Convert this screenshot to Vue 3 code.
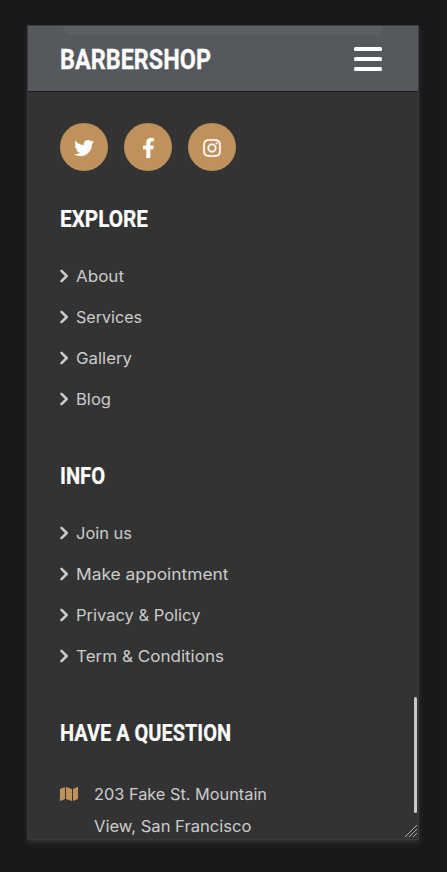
<script setup>
const sections = [
  { title: 'EXPLORE', width: 88, links: [
    { text: 'About', width: 48 }, { text: 'Services', width: 66 },
    { text: 'Gallery', width: 56 }, { text: 'Blog', width: 35 },
  ] },
  { title: 'INFO', width: 45, links: [
    { text: 'Join us', width: 56 }, { text: 'Make appointment', width: 152.5 },
    { text: 'Privacy & Policy', width: 124.5 }, { text: 'Term & Conditions', width: 148 },
  ] },
]

// Condenses or widens a label to its intended line width.
const vFit = {
  mounted(el, { value }) {
    const natural = el.getBoundingClientRect().width
    if (natural) el.style.transform = `scaleX(${value / natural})`
  },
}
</script>

<template>
  <div class="stage">
    <div class="phone">
      <header class="bar">
        <div class="sheen"></div>
        <span v-fit="151" class="brand">BARBERSHOP</span>
        <div class="burger"><i></i><i></i><i></i></div>
      </header>
      <main class="content">
        <div class="social">
          <a class="disc">
            <svg width="20" height="20" viewBox="0 0 512 512"><path d="M459.37 151.716c.325 4.548.325 9.097.325 13.645 0 138.72-105.583 298.558-298.558 298.558-59.452 0-114.68-17.219-161.137-47.106 8.447.974 16.568 1.299 25.34 1.299 49.055 0 94.213-16.568 130.274-44.832-46.132-.975-84.792-31.188-98.112-72.772 6.498.974 12.995 1.624 19.818 1.624 9.421 0 18.843-1.3 27.614-3.573-48.081-9.747-84.143-51.98-84.143-102.985v-1.299c13.969 7.797 30.214 12.67 47.431 13.319-28.264-18.843-46.781-51.005-46.781-87.391 0-19.492 5.197-37.36 14.294-52.954 51.655 63.675 129.3 105.258 216.365 109.807-1.624-7.797-2.599-15.918-2.599-24.04 0-57.828 46.782-104.934 104.934-104.934 30.213 0 57.502 12.67 76.67 33.137 23.715-4.548 46.456-13.32 66.599-25.34-7.798 24.366-24.366 44.833-46.132 57.827 21.117-2.273 41.584-8.122 60.426-16.243-14.292 20.791-32.161 39.308-52.628 54.253z" /></svg>
          </a>
          <a class="disc">
            <svg class="bold" width="13" height="20" viewBox="0 0 320 512"><path d="M279.14 288l14.22-92.66h-88.91v-60.13c0-25.35 12.42-50.06 52.24-50.06h40.42V6.26S260.43 0 225.36 0c-73.22 0-121.08 44.38-121.08 124.72v70.62H22.89V288h81.39v224h100.17V288z" /></svg>
          </a>
          <a class="disc">
            <svg class="bold" width="18" height="20" viewBox="0 0 448 512"><path d="M224.1 141c-63.600 0-114.900 51.300-114.900 114.900s51.300 114.900 114.900 114.900S339 319.500 339 255.900 287.700 141 224.100 141zm0 189.600c-41.100 0-74.700-33.500-74.700-74.700s33.500-74.700 74.700-74.700 74.700 33.500 74.700 74.700-33.600 74.700-74.700 74.700zm146.400-194.300c0 14.900-12 26.800-26.800 26.800-14.900 0-26.800-12-26.800-26.800s12-26.800 26.800-26.800 26.800 12 26.800 26.800zm76.100 27.200c-1.700-35.900-9.900-67.700-36.200-93.900-26.200-26.200-58-34.400-93.900-36.200-37-2.100-147.900-2.100-184.900 0-35.800 1.700-67.600 9.900-93.900 36.100s-34.400 58-36.200 93.900c-2.100 37-2.100 147.900 0 184.900 1.700 35.900 9.900 67.700 36.200 93.900s58 34.400 93.900 36.200c37 2.100 147.900 2.100 184.900 0 35.900-1.700 67.700-9.900 93.900-36.200 26.200-26.200 34.400-58 36.200-93.900 2.100-37 2.100-147.800 0-184.800zM398.800 388c-7.800 19.600-22.900 34.700-42.600 42.600-29.500 11.700-99.500 9-132.100 9s-102.700 2.600-132.100-9c-19.600-7.800-34.700-22.900-42.600-42.600-11.700-29.500-9-99.500-9-132.100s-2.600-102.700 9-132.100c7.800-19.600 22.900-34.700 42.600-42.600 29.500-11.700 99.500-9 132.100-9s102.700-2.600 132.100 9c19.600 7.800 34.700 22.900 42.600 42.600 11.700 29.500 9 99.500 9 132.100s2.700 102.700-9 132.100z" /></svg>
          </a>
        </div>

        <section v-for="s in sections" :key="s.title" class="section">
          <h2><span v-fit="s.width" class="fit">{{ s.title }}</span></h2>
          <ul>
            <li v-for="l in s.links" :key="l.text">
              <svg width="8" height="14" viewBox="0 0 8 14"><path d="M1.500 1.800 6.700 7l-5.200 5.200" /></svg>
              <span v-fit="l.width" class="fit">{{ l.text }}</span>
            </li>
          </ul>
        </section>

        <section>
          <h2><span v-fit="171" class="fit">HAVE A QUESTION</span></h2>
          <div class="address">
            <svg width="18" height="16" viewBox="0 0 576 512"><path d="M0 117.660v346.320c0 11.320 11.430 19.060 21.940 14.860L160 416V32L20.120 87.950A32.006 32.006 0 0 0 0 117.660zM192 416l192 64V96L192 32v384zM554.060 33.160L416 96v384l139.880-55.950A31.996 31.996 0 0 0 576 394.340V48.020c0-11.320-11.430-19.060-21.940-14.860z" /></svg>
            <div class="lines">
              <div><span v-fit="173" class="fit">203 Fake St. Mountain</span></div>
              <div><span v-fit="157.5" class="fit">View, San Francisco</span></div>
            </div>
          </div>
        </section>
      </main>
      <div class="thumb"></div>
      <svg class="grip" width="14" height="14" viewBox="0 0 14 14"><path d="M1 13 13 1M5 13l8-8M9 13l4-4" /></svg>
    </div>
  </div>
</template>

<style>
body { background: #19191b; }
</style>

<style scoped>
.stage {
  box-sizing: border-box;
  height: 872px;
  padding: 25px 28px 32px 27px;
  background: #19191b;
  overflow: hidden;
}
.phone {
  position: relative;
  box-sizing: border-box;
  height: 815px;
  border: 1px solid #3b3b3d;
  background: #333;
  box-shadow: 0 3px 5px #303032;
  overflow: hidden;
  font-family: Inter, "Liberation Sans", sans-serif;
}
.bar {
  position: relative;
  box-sizing: border-box;
  height: 66px;
  padding: 0 36px 0 32px;
  display: flex;
  align-items: center;
  justify-content: space-between;
  background: #55585d;
  border-bottom: 1px solid #1d1d20;
}
.sheen {
  position: absolute;
  top: 0;
  left: 35px;
  right: 35px;
  height: 9px;
  border-radius: 0 0 7px 7px;
  background: #5c5f64;
}
.brand {
  position: relative;
  padding-top: 3px;
  display: inline-block;
  transform-origin: left;
  font: 700 28px/40px Roboto, sans-serif;
  -webkit-text-stroke: 0.3px #fff;
  color: #fff;
}
.burger { display: flex; flex-direction: column; gap: 6px; flex: none; }
.burger i { width: 28px; height: 4px; border-radius: 1.5px; background: #fff; }
.content { padding: 31px 32px 0; }
.social { display: flex; gap: 16px; margin-bottom: 29px; }
.disc {
  width: 48px;
  height: 48px;
  border-radius: 50%;
  background: #bf925b;
  display: flex;
  align-items: center;
  justify-content: center;
}
.disc svg { fill: #fff; margin-top: 2px; overflow: visible; }
.disc .bold { stroke: #fff; stroke-width: 5; }
h2 {
  margin: 0 0 19px;
  height: 36px;
  font: 700 24px/38px Roboto, sans-serif;
  -webkit-text-stroke: 0.2px #fff;
  color: #fff;
}
.section { margin-bottom: 38px; }
.fit { display: inline-block; white-space: nowrap; transform-origin: left; }
ul { margin: 0; padding: 0; list-style: none; }
li {
  height: 41px;
  display: flex;
  align-items: center;
  gap: 8px;
  color: #ccc;
  font-size: 16px;
}
li svg { fill: none; stroke: #ccc; stroke-width: 2.5; stroke-linecap: round; stroke-linejoin: round; }
.address { display: flex; gap: 16px; padding-top: 9px; color: #ccc; font-size: 16px; line-height: 32px; }
.address svg { fill: #bf925b; margin-top: 8px; }
.lines > div { height: 32px; }
.thumb {
  position: absolute;
  right: 1px;
  top: 671px;
  width: 3px;
  height: 116px;
  border-radius: 2px;
  background: #cbcbcb;
}
.grip { position: absolute; right: 0; bottom: 1px; fill: none; stroke: #aaa; stroke-width: 1; }
</style>
